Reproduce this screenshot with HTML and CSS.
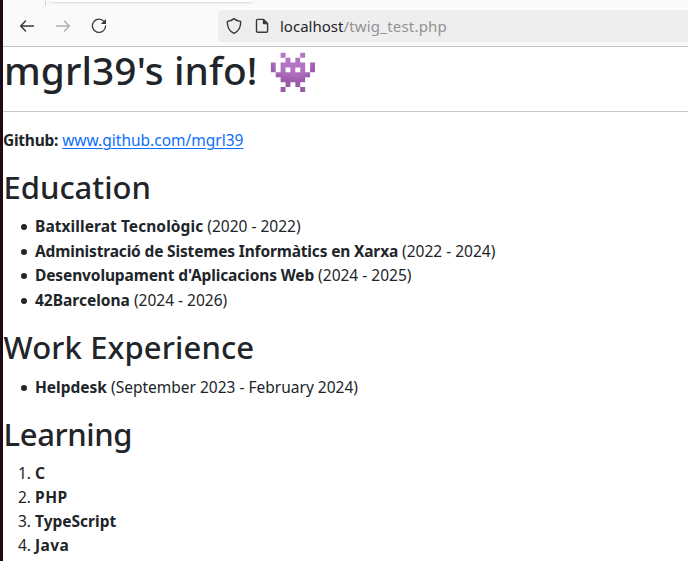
FILE: index.html
```
<!DOCTYPE html>
<html lang="ca">
<head>
<meta charset="utf-8">
<title>mgrl39's info!</title>
<link rel="stylesheet" href="styles.css">
</head>
<body>
<div class="window">
  <header class="chrome">
    <div class="tabs"><div class="tab-gap"></div><div class="tab"></div></div>
    <nav class="toolbar">
      <svg class="icon back" viewBox="0 0 16 16"><path d="M14.500 8H1.600M6.500 3 1.700 8l4.800 5"/></svg>
      <svg class="icon forward" viewBox="0 0 16 16"><path d="M1.500 8h12.900M9.500 3 14.300 8l-4.800 5"/></svg>
      <svg class="icon reload" viewBox="0 0 16 16"><path d="M13.100 3.600A6.600 6.600 0 1 0 14.600 8"/><path class="solid" d="M15 .9v5.200h-5.200z"/></svg>
      <div class="urlbar">
        <svg class="icon shield" viewBox="0 0 16 16"><path d="M8 .6C6.400 2 4 3 1.400 3.400 1.100 8.500 2.800 13 8 15.400 13.200 13 14.900 8.500 14.600 3.400 12 3 9.600 2 8 .6z"/></svg>
        <svg class="icon page" viewBox="0 0 16 16"><path d="M3.800 1.400h5.700L13.600 5.500v7.500a1.300 1.300 0 0 1-1.300 1.300H3.800A1.300 1.300 0 0 1 2.500 13V2.700a1.300 1.300 0 0 1 1.300-1.300z"/><path class="solid" d="M8.800 1.200 13.800 6.200H9.800a1 1 0 0 1-1-1z"/></svg>
        <div class="url"><span class="host">localhost</span><span class="path">/twig_test.php</span></div>
      </div>
    </nav>
  </header>
  <main>
    <h1>mgrl39's info! <span class="emoji">👾</span></h1>
    <p class="github"><b>Github:</b> <a href="#">www.github.com/mgrl39</a></p>
    <h2 class="education">Education</h2>
    <ul class="studies">
      <li><b class="batx">Batxillerat Tecnològic</b> (2020 - 2022)</li>
      <li><b class="asix">Administració de Sistemes Informàtics en Xarxa</b> (2022 - 2024)</li>
      <li><b class="daw">Desenvolupament d'Aplicacions Web</b> (2024 - 2025)</li>
      <li><b>42Barcelona</b> (2024 - 2026)</li>
    </ul>
    <h2 class="work">Work Experience</h2>
    <ul class="jobs">
      <li><b>Helpdesk</b> (September 2023 - February 2024)</li>
    </ul>
    <h2 class="learning">Learning</h2>
    <ol>
      <li><b>C</b></li>
      <li><b class="php">PHP</b></li>
      <li><b>TypeScript</b></li>
      <li><b class="java">Java</b></li>
    </ol>
  </main>
</div>
</body>
</html>
```
FILE: styles.css
```
* { box-sizing: border-box; }
body {
  margin: 0;
  height: 561px;
  overflow: hidden;
  background: #fff;
  color: #212529;
  font: 15.5px/24px "Noto Sans", sans-serif;
}
.window { height: 561px; border-left: 3px solid #1d0a18; }

.chrome { height: 47px; background: #fafafa; border-bottom: 1px solid #c4c4c6; }
.tabs { display: flex; height: 6px; }
.tab-gap { width: 43px; border-right: 1px solid #d4d4d6; }
.tab {
  width: 203px;
  height: 2px;
  margin-left: 4px;
  background: #fff;
  border-radius: 0 0 4px 4px;
  box-shadow: 0 0 3px rgba(0, 0, 0, .3);
}
.toolbar { display: flex; align-items: center; height: 40px; padding-left: 16px; }
.icon { flex: none; width: 16px; height: 16px; fill: none; stroke: #38383c; stroke-width: 1.4; stroke-linecap: round; stroke-linejoin: round; }
.icon .solid { fill: #38383c; stroke: none; }
.forward { margin-left: 20px; stroke: #b0b0b2; }
.reload { margin-left: 20px; stroke-width: 1.3; }
.urlbar {
  display: flex;
  align-items: center;
  flex: 1;
  height: 32px;
  margin-left: 111px;
  padding-left: 8px;
  background: #eeeeee;
  border-radius: 4px 0 0 4px;
}
.page { margin-left: 12px; }
.url { margin-left: 10px; font-size: 15px; white-space: nowrap; }
.host { color: #252529; }
.path { color: #929294; letter-spacing: .2px; }

h1, h2, p, ul, ol { margin: 0; }
h1 {
  height: 65px;
  padding-left: 1px;
  border-bottom: 1px solid #c8c9ca;
  font-size: 38.8px;
  font-weight: 600;
  font-variation-settings: "wght" 560;
  line-height: 47px;
  letter-spacing: .05px;
  white-space: nowrap;
}
.emoji { display: inline-block; height: 40px; font-size: 40px; line-height: 40px; vertical-align: top; margin-top: 4px; }
.github { margin-top: 16px; }
.github b { letter-spacing: -.25px; }
a { color: #0d6efd; text-decoration: underline; text-underline-offset: 2px; text-decoration-thickness: 1px; }
h2 { margin-top: 16px; padding-left: .6px; font-size: 31px; font-weight: 500; line-height: 38px; white-space: nowrap; }
h1 { font-weight: 500; font-variation-settings: normal; letter-spacing: .1px; }
.education { letter-spacing: -.03px; }
.work { letter-spacing: .12px; }
.learning { letter-spacing: -.4px; }
ul, ol { margin-top: 8px; padding-left: 32px; }
ul { list-style: none; }
ul li::before {
  content: "";
  display: inline-block;
  width: 6px;
  height: 6px;
  margin: 0 8px 2px -14px;
  border-radius: 50%;
  background: #212529;
}
.studies li { line-height: 24.5px; }
.jobs { margin-top: 9px; }
.batx { letter-spacing: .07px; }
.asix { letter-spacing: -.16px; }
.daw { letter-spacing: -.12px; }
.php { letter-spacing: .5px; }
.java { letter-spacing: .4px; }
```
